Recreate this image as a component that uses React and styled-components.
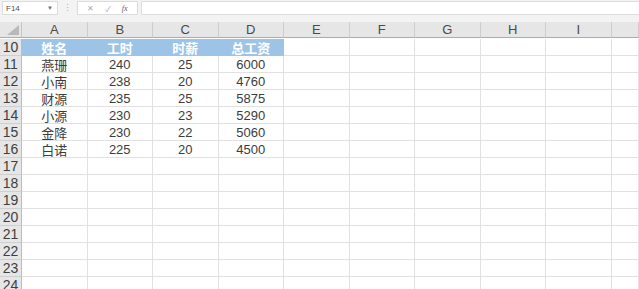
import styled, { createGlobalStyle } from "styled-components";

const GlobalStyle = createGlobalStyle`
  html, body {
    margin: 0;
    padding: 0;
    background: #ffffff;
  }
  * {
    box-sizing: border-box;
  }
`;

const Window = styled.div`
  width: 639px;
  height: 289px;
  overflow: hidden;
  background: #ffffff;
  font-family: "Liberation Sans", "Noto Sans CJK SC", sans-serif;
`;

const FormulaBar = styled.div`
  display: flex;
  align-items: flex-start;
  height: 22px;
  padding: 1px 0 0 2px;
  background: #f3f3f3;
`;

const NameBox = styled.div`
  display: flex;
  align-items: center;
  justify-content: space-between;
  width: 56px;
  height: 14px;
  padding: 0 4px 0 3px;
  background: #ffffff;
  border: 1px solid #dcdcdc;
  font-size: 8px;
  color: #505050;
`;

const Caret = styled.span`
  font-size: 6px;
  color: #707070;
`;

const Dots = styled.div`
  width: 19px;
  height: 14px;
  display: flex;
  align-items: center;
  justify-content: center;
  font-size: 9px;
  color: #b0b0b0;
`;

const FxGroup = styled.div`
  display: flex;
  align-items: center;
  justify-content: space-around;
  width: 61px;
  height: 14px;
  padding: 0 4px;
  background: #ffffff;
  border: 1px solid #dcdcdc;
  color: #a8a8a8;
  font-size: 8px;
`;

const Fx = styled.span`
  font-family: "Liberation Serif", serif;
  font-style: italic;
  font-size: 8px;
  color: #606060;
`;

const FormulaInput = styled.div`
  flex: 1;
  height: 14px;
  margin-left: 3px;
  background: #ffffff;
  border-top: 1px solid #dcdcdc;
  border-left: 1px solid #dcdcdc;
  border-bottom: 1px solid #dcdcdc;
`;

const Sheet = styled.div`
  display: grid;
  grid-template-columns: 22px repeat(9, 65.5px) 1fr;
  grid-auto-rows: 17px;
`;

const Corner = styled.div`
  position: relative;
  height: 16px;
  background: #e6e6e6;
  border-right: 1px solid #c6c6c6;
  border-bottom: 1px solid #ababab;

  &::after {
    content: "";
    position: absolute;
    right: 2px;
    bottom: 2px;
    border-style: solid;
    border-width: 0 0 10px 12px;
    border-color: transparent transparent #b9b9b9 transparent;
  }
`;

const ColHead = styled.div`
  display: flex;
  align-items: center;
  justify-content: center;
  height: 16px;
  background: #e6e6e6;
  border-right: 1px solid #cdcdcd;
  border-bottom: 1px solid #ababab;
  font-size: 13px;
  color: #4a4a4a;
`;

const RowHead = styled.div`
  display: flex;
  align-items: center;
  justify-content: center;
  background: #e6e6e6;
  border-right: 1px solid #bcbcbc;
  border-bottom: 1px solid #cfcfcf;
  font-size: 14px;
  color: #3f3f3f;
`;

const Cell = styled.div`
  display: flex;
  align-items: center;
  justify-content: center;
  background: ${(p) => (p.$head ? "#9dc3e6" : "#ffffff")};
  border-right: 1px solid ${(p) => (p.$head ? "#9dc3e6" : "#e1e1e1")};
  border-bottom: 1px solid ${(p) => (p.$head ? "#9dc3e6" : "#e1e1e1")};
  font-family: "Liberation Sans", "Noto Sans CJK SC", sans-serif;
  font-size: 13px;
  font-weight: ${(p) => (p.$head ? 700 : 400)};
  color: ${(p) => (p.$head ? "#ffffff" : "#3c3c3c")};
`;

const columns = ["A", "B", "C", "D", "E", "F", "G", "H", "I", ""];

const data = [
  ["姓名", "工时", "时薪", "总工资"],
  ["燕珊", "240", "25", "6000"],
  ["小南", "238", "20", "4760"],
  ["财源", "235", "25", "5875"],
  ["小源", "230", "23", "5290"],
  ["金降", "230", "22", "5060"],
  ["白诺", "225", "20", "4500"],
];

const rowNumbers = Array.from({ length: 15 }, (_, i) => 10 + i);

function App() {
  return (
    <Window>
      <GlobalStyle />
      <FormulaBar>
        <NameBox>
          <span>F14</span>
          <Caret>▼</Caret>
        </NameBox>
        <Dots>⋮</Dots>
        <FxGroup>
          <span>✕</span>
          <span>✓</span>
          <Fx>fx</Fx>
        </FxGroup>
        <FormulaInput />
      </FormulaBar>
      <Sheet>
        <Corner />
        {columns.map((c, i) => (
          <ColHead key={i}>{c}</ColHead>
        ))}
        {rowNumbers.map((n, r) => {
          const values = data[r] || [];
          return [
            <RowHead key={`h${n}`}>{n}</RowHead>,
            ...columns.map((_, c) => (
              <Cell key={`${n}-${c}`} $head={r === 0 && c < 4}>
                {values[c] || ""}
              </Cell>
            )),
          ];
        })}
      </Sheet>
    </Window>
  );
}

export default App;
